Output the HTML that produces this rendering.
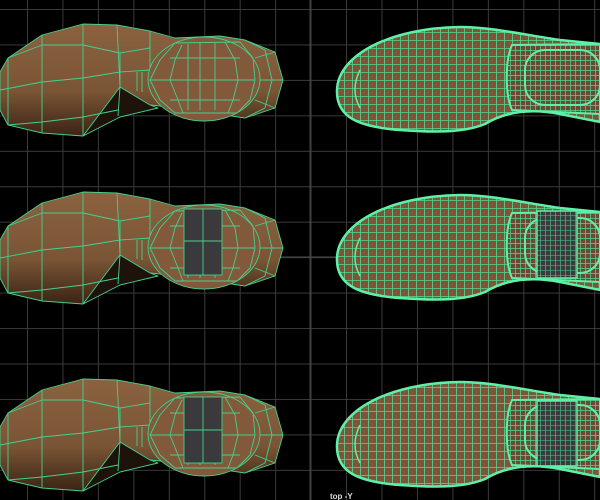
<!DOCTYPE html>
<html><head><style>
html,body{margin:0;padding:0;background:#000;width:600px;height:500px;overflow:hidden}
svg{display:block}
</style></head><body>
<svg width="600" height="500" viewBox="0 0 600 500" xmlns="http://www.w3.org/2000/svg">
<defs>
<linearGradient id="br" x1="0" y1="0" x2="0" y2="1">
<stop offset="0" stop-color="#8a6240"/><stop offset="0.6" stop-color="#7a5535"/><stop offset="1" stop-color="#3a2414"/>
</linearGradient>
<pattern id="mesh" width="8" height="8" patternUnits="userSpaceOnUse">
<rect width="8" height="8" fill="#7d5638"/>
<path d="M0 0.5H8M0.5 0V8" stroke="#4fd896" stroke-width="0.8"/>
</pattern>
<pattern id="mesh2" width="5" height="5" patternUnits="userSpaceOnUse">
<rect width="5" height="5" fill="#6a4a33"/>
<path d="M0 0.5H5M0.5 0V5" stroke="#4fd896" stroke-width="0.7"/>
</pattern>
<pattern id="meshd" width="5" height="5" patternUnits="userSpaceOnUse">
<rect width="5" height="5" fill="#3c3a3c"/>
<path d="M0 0.5H5M0.5 0V5" stroke="#45c890" stroke-width="0.6"/>
</pattern>
<pattern id="grid" width="35.45" height="35.45" patternUnits="userSpaceOnUse" x="27" y="9">
<path d="M0 0.5H35.45M0.5 0V35.45" stroke="#3a3a3a" stroke-width="1"/>
</pattern>
<g id="L" stroke="#45d08c" stroke-width="0.9" stroke-linejoin="round" fill="none">
<path d="M0 72 L8 58 L42 35 L83 24 L117 25 L150 31 L175 38 L220 36 L245 40 L275 52 L283 80 L275 108 L245 118 L225 115 L200 110 L150 105 L118 116 L83 136 L42 133 L8 125 L0 110Z" fill="url(#br)"/>
<path d="M120 87 L150 105 L158 108 L120 117 L83 136Z" fill="#1e130b"/>
<path d="M8 58 L8 125 M42 35 L42 133 M83 24 L83 136 M117 25 L120 87 L118 116 M0 90 L42 82 L83 78 L120 72 L150 70 M8 58 L42 45 L83 45 L120 53 L150 48 M8 125 L42 122 L83 117 L118 110 M120 53 L120 87 M150 31 L150 70 M137 72 L137 91 M142 72 L142 92"/>
<path d="M245 40 L265 50 L272 80 L265 108 L245 118 M255 58 L275 52 M255 100 L275 108 M255 80 L283 80"/>
<ellipse cx="204" cy="79" rx="56" ry="42" fill="#82593a"/>
<path d="M160 60 L175 43 L240 42 L253 58 L255 80 L250 100 L237 113 L175 113 L160 100 L150 80Z M182 45 L175 60 L170 80 L178 100 L183 113 M225 42 L235 60 L238 80 L233 100 L228 113 M188 44 L188 110 M200 43 L200 110 M215 43 L215 110 M150 80 L255 80 M170 58 L240 58 M170 100 L240 100"/>
</g>
</defs>
<rect width="600" height="500" fill="#000"/>
<rect width="600" height="500" fill="url(#grid)"/>
<path d="M310 0V500M0 257H600" stroke="#4a4a4a" stroke-width="1"/>
<use href="#L"/>
<use href="#L" transform="translate(0,168)"/>
<rect x="184" y="209" width="38" height="66" fill="#3a3a3c" stroke="#45d08c" stroke-width="0.9"/>
<path d="M203 209V275M184 241H222" stroke="#45d08c" stroke-width="0.9"/>
<use href="#L" transform="translate(0,355)"/>
<rect x="184" y="397" width="38" height="66" fill="#3a3a3c" stroke="#45d08c" stroke-width="0.9"/>
<path d="M203 397V463M184 430H222" stroke="#45d08c" stroke-width="0.9"/>
<g id="R">
<path d="M337 90 C338 55 390 28 460 27 C490 27 520 34 560 40 L600 44 L600 122 L560 114 C530 108 505 112 485 124 C465 132 440 133 400 130 C360 127 336 118 337 90Z" fill="url(#mesh)" stroke="#5ff0a8" stroke-width="2.5"/>
<path d="M512 45 L600 44 L600 114 L512 110 C505 95 505 60 512 45Z" fill="url(#mesh2)" stroke="#5ff0a8" stroke-width="2"/>
<rect x="525" y="50" width="75" height="55" rx="20" fill="none" stroke="#5ff0a8" stroke-width="2"/>
<path d="M360 70 Q350 90 360 108" stroke="#5ff0a8" stroke-width="1.5" fill="none"/>
</g>
<use href="#R" transform="translate(0,168)"/>
<rect x="537" y="211" width="40" height="67" fill="url(#meshd)" stroke="#5ff0a8" stroke-width="1.5"/>
<use href="#R" transform="translate(0,355)"/>
<rect x="537" y="401" width="40" height="65" fill="url(#meshd)" stroke="#5ff0a8" stroke-width="1.5"/>
<text x="330" y="499" font-family="Liberation Sans, sans-serif" font-size="8" font-weight="bold" fill="#ddd">top -Y</text>
</svg>
</body></html>
